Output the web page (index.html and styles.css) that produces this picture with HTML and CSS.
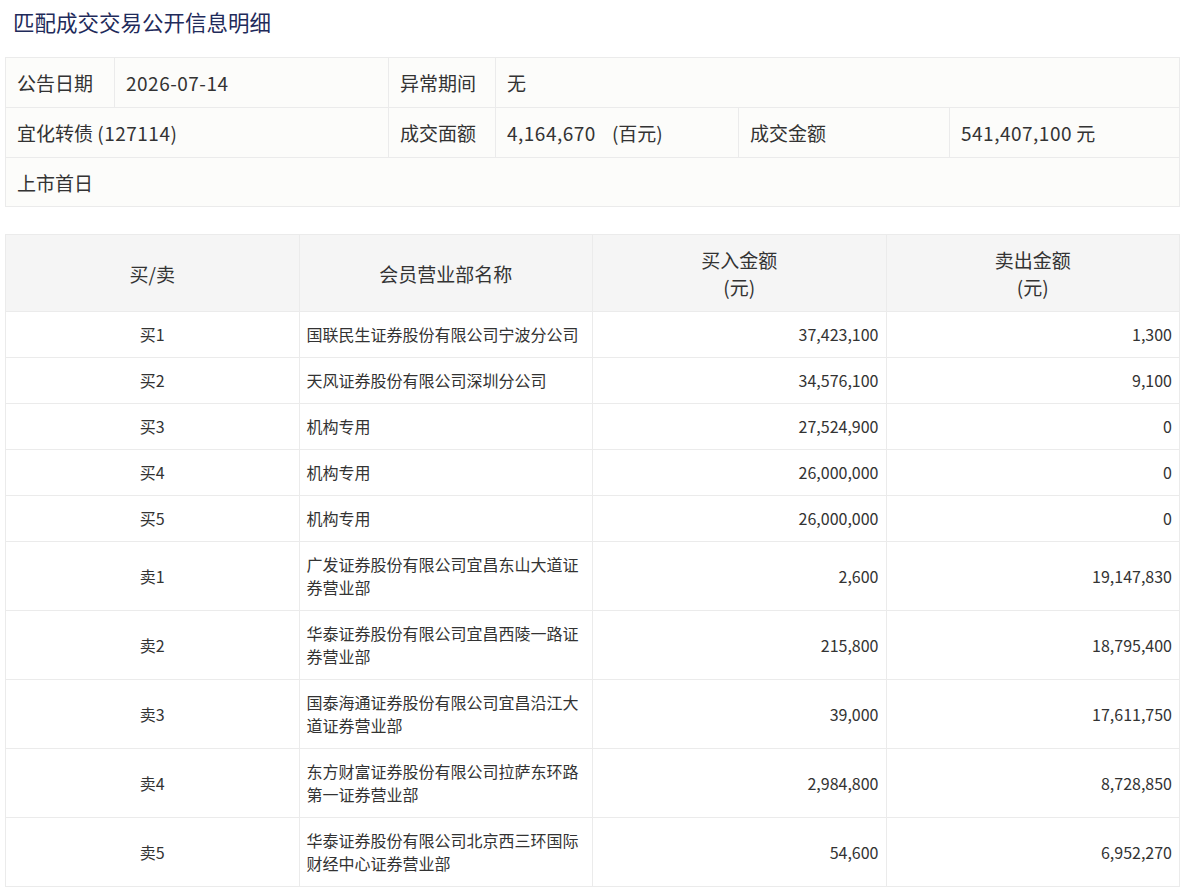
FILE: index.html
```html
<!DOCTYPE html>
<html lang="zh">
<head>
<meta charset="utf-8">
<title>匹配成交交易公开信息明细</title>
<link rel="stylesheet" href="styles.css">
</head>
<body>
<h1 class="title">匹配成交交易公开信息明细</h1>
<table class="info">
  <colgroup>
    <col style="width:109px"><col style="width:274px"><col style="width:107px"><col style="width:243px"><col style="width:211px"><col>
  </colgroup>
  <tr>
    <td>公告日期</td>
    <td class="num">2026-07-14</td>
    <td>异常期间</td>
    <td colspan="3">无</td>
  </tr>
  <tr>
    <td colspan="2">宜化转债 <span class="num">(127114)</span></td>
    <td>成交面额</td>
    <td><span class="num">4,164,670</span><span class="unit">(百元)</span></td>
    <td>成交金额</td>
    <td><span class="num">541,407,100</span> 元</td>
  </tr>
  <tr class="last">
    <td colspan="6">上市首日</td>
  </tr>
</table>

<table class="detail">
  <colgroup><col><col><col><col></colgroup>
  <thead>
    <tr>
      <th>买/卖</th>
      <th>会员营业部名称</th>
      <th>买入金额<br>(元)</th>
      <th>卖出金额<br>(元)</th>
    </tr>
  </thead>
  <tbody>
    <tr><td class="c">买1</td><td>国联民生证券股份有限公司宁波分公司</td><td class="r">37,423,100</td><td class="r">1,300</td></tr>
    <tr><td class="c">买2</td><td>天风证券股份有限公司深圳分公司</td><td class="r">34,576,100</td><td class="r">9,100</td></tr>
    <tr><td class="c">买3</td><td>机构专用</td><td class="r">27,524,900</td><td class="r">0</td></tr>
    <tr><td class="c">买4</td><td>机构专用</td><td class="r">26,000,000</td><td class="r">0</td></tr>
    <tr><td class="c">买5</td><td>机构专用</td><td class="r">26,000,000</td><td class="r">0</td></tr>
    <tr><td class="c">卖1</td><td>广发证券股份有限公司宜昌东山大道证券营业部</td><td class="r">2,600</td><td class="r">19,147,830</td></tr>
    <tr><td class="c">卖2</td><td>华泰证券股份有限公司宜昌西陵一路证券营业部</td><td class="r">215,800</td><td class="r">18,795,400</td></tr>
    <tr><td class="c">卖3</td><td>国泰海通证券股份有限公司宜昌沿江大道证券营业部</td><td class="r">39,000</td><td class="r">17,611,750</td></tr>
    <tr><td class="c">卖4</td><td>东方财富证券股份有限公司拉萨东环路第一证券营业部</td><td class="r">2,984,800</td><td class="r">8,728,850</td></tr>
    <tr><td class="c">卖5</td><td>华泰证券股份有限公司北京西三环国际财经中心证券营业部</td><td class="r">54,600</td><td class="r">6,952,270</td></tr>
  </tbody>
</table>
</body>
</html>
```
FILE: styles.css
```css
html, body {
  margin: 0;
  padding: 0;
  background: #fff;
}
body {
  padding: 0 5px;
  font-family: "Noto Sans CJK SC", "Microsoft YaHei", sans-serif;
  color: #333;
}
.title {
  margin: 0;
  padding: 7px 8px 0;
  height: 50px;
  box-sizing: border-box;
  font-size: 21.5px;
  line-height: 30px;
  font-weight: normal;
  color: #1f2b5b;
}
table {
  border-collapse: collapse;
  width: 1175px;
  table-layout: fixed;
}
.info {
  margin-top: 7px;
  background: #fcfcfa;
}
.info td {
  border: 1px solid #ebebeb;
  height: 50px;
  box-sizing: border-box;
  padding: 0 11px;
  font-size: 19px;
  line-height: 27px;
  color: #333;
  white-space: nowrap;
}
.info tr.last td {
  height: 49px;
}
.info .num {
  letter-spacing: 0.5px;
}
.info .unit {
  margin-left: 16px;
}
.detail {
  margin-top: 27px;
}
.detail th {
  background: #f5f5f5;
  border: 1px solid #ebebeb;
  font-weight: normal;
  font-size: 19px;
  line-height: 27px;
  padding: 11px 7px;
  color: #333;
  text-align: center;
}
.detail td {
  border: 1px solid #ebebeb;
  font-size: 16px;
  line-height: 23px;
  padding: 11px 7px;
  color: #333;
}
.detail td.c { text-align: center; }
.detail td.r { text-align: right; }
```
